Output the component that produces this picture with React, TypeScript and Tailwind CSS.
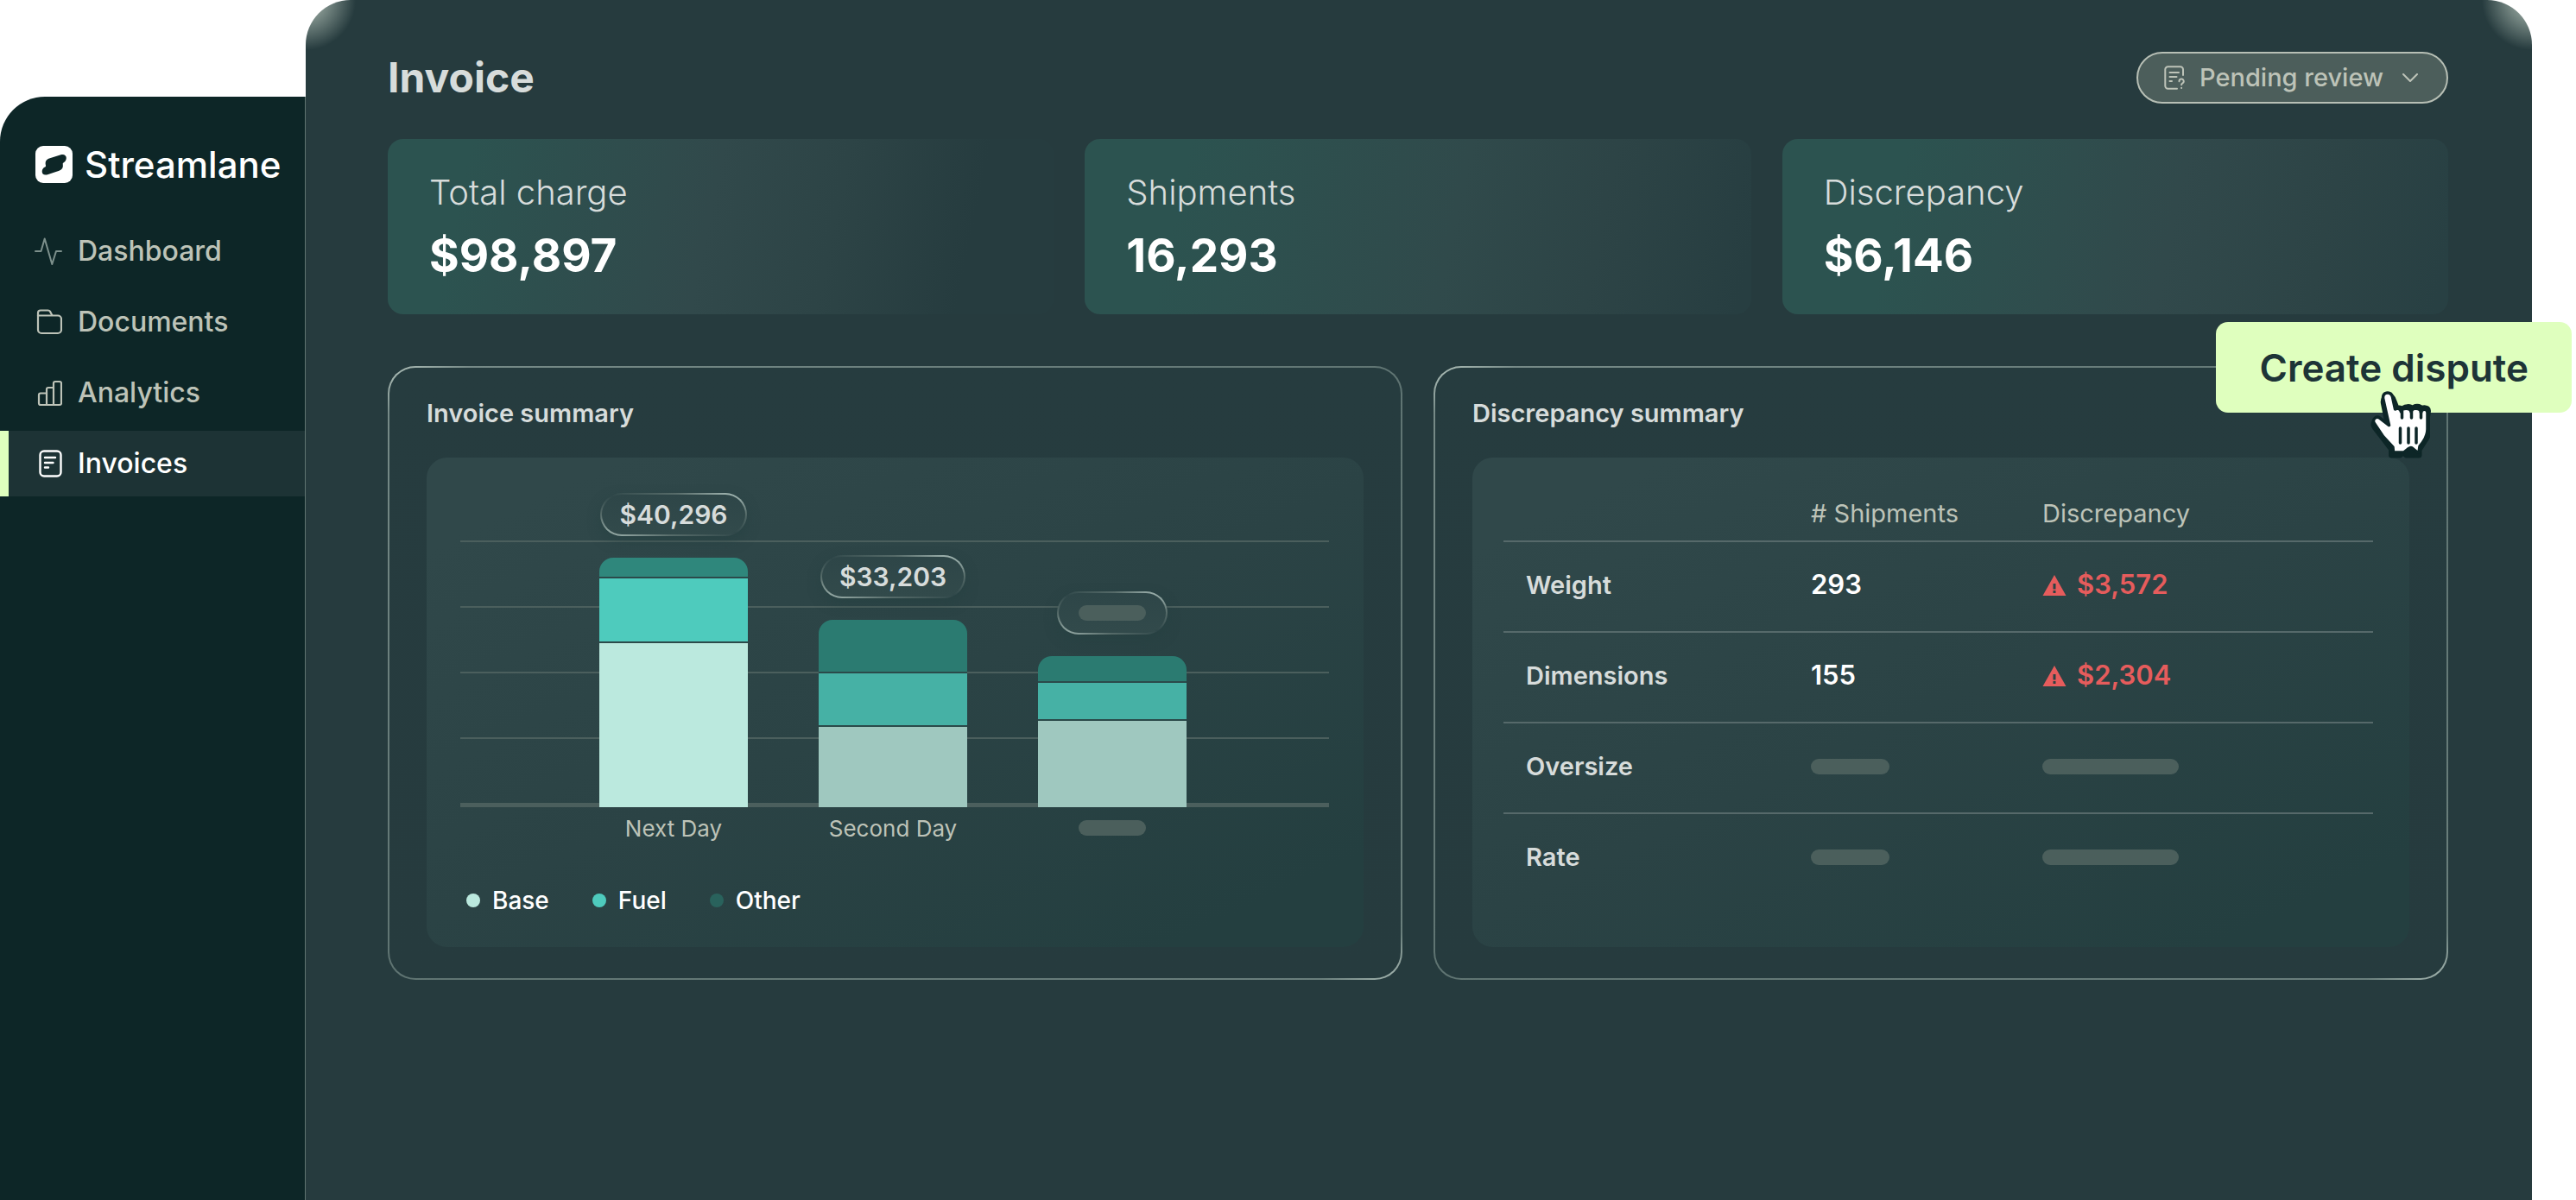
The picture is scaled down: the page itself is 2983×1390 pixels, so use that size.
import React, { useState } from 'react';

const ActivityIcon = () => (
  <svg viewBox="0 0 32 32" fill="none" stroke="#7d908c" strokeWidth={2} strokeLinecap="round" strokeLinejoin="round" className="size-8">
    <path d="M1 16h6.5L11.7 1.5 20.3 31l4.7-15h6" />
  </svg>
);

const FolderIcon = () => (
  <svg viewBox="0 0 32 32" fill="none" stroke="currentColor" strokeWidth={2.2} strokeLinejoin="round" className="size-8">
    <path d="M4 9V5.500A3 3 0 0 1 7 2.500h8.500a3 3 0 0 1 2.600 1.400L20.500 8.500" />
    <path d="M4 8.500h23a4 4 0 0 1 4 4V25a4 4 0 0 1-4 4H8a4 4 0 0 1-4-4V8.500Z" />
  </svg>
);

const ChartIcon = () => (
  <svg viewBox="0 0 32 32" fill="none" stroke="currentColor" strokeWidth={2.2} strokeLinejoin="round" className="size-8">
    <path d="M14 30V16.500H7A2 2 0 0 0 5 18.500V28a2 2 0 0 0 2 2h22a2 2 0 0 0 2-2V5a2 2 0 0 0-2-2h-5a2 2 0 0 0-2 2v25" />
    <path d="M14 17v-5a2 2 0 0 1 2-2h6" />
  </svg>
);

const DocIcon = () => (
  <svg viewBox="0 0 32 32" fill="none" stroke="currentColor" strokeWidth={2.4} strokeLinecap="round" className="size-8">
    <rect x="6.500" y="1.500" width="24" height="29" rx="4.500" />
    <path d="M12 9h12M12 15h9.500M12 20.500h4" />
  </svg>
);

const DocQuestionIcon = () => (
  <svg viewBox="0 0 24 28" fill="none" stroke="currentColor" strokeWidth={2} strokeLinecap="round" className="w-6 h-7">
    <path d="M22 11V4.500a3.200 3.200 0 0 0-3.200-3.200H4.500a3.200 3.200 0 0 0-3.200 3.200v19a3.200 3.200 0 0 0 3.200 3.200H15" />
    <path d="M6.500 8h10.500M6.500 13h8M6.500 18h2.500" />
    <path d="M17.500 18.200a2.600 2.600 0 1 1 3.900 2.200c-.8.500-1.300.9-1.300 1.800M20.100 25.700v.200" />
  </svg>
);

const WarningIcon = () => (
  <svg viewBox="0 0 28 24" className="w-7 h-6">
    <path d="M14 0 27.500 24H.500Z" fill="#e65c5c" />
    <path d="M12.500 10h3v6.500h-3ZM12.500 18h3v3h-3Z" fill="#2c4244" />
  </svg>
);

const HandCursor = () => (
  <svg viewBox="0 0 80 90" className="absolute left-[174px] top-[68px] w-20 h-[90px] pointer-events-none">
    <g fill="#0d2627" stroke="#0d2627" strokeWidth={7} strokeLinejoin="round">
      <path d="M25.500 15c-4 0-6 3-5 7.500L26 50 16 43c-4-2.500-9 2-6 6.500L29.500 75v7H39l4-4 3.500 4H61v-6l9.500-15V38l1-7c0-4-6-4-7-1-1-5-10-5-11 0-1.500-5-10-4-11 0-1-2-5-2.500-7-1l-3.500-9c-1-4-2.500-6-6-6Z" transform="translate(0 4)" />
    </g>
    <path
      d="M25 14c-4 0-6.200 3-5.200 7.500L26.500 51.500 15.500 43c-4-2.500-9 2-6 6.500l10 15 11.500 12.500.5 6h12l5-4c3-2 4-2 6 0l5 4h1.500L62 76c6-7 9-13 9-20V37c0-5-7-5-7.500 0-.500-6-10.500-6-11.500-1-1-5-10.500-5-11.500 0-1-4-5-4.500-7-3l-3-14c-.800-3.500-2.500-5-5.500-5Z"
      fill="#fff"
      stroke="#0d2627"
      strokeWidth={3.5}
      strokeLinejoin="round"
    />
    <path d="M39.500 55v17M49 55v17M58 55v17" stroke="#0d2627" strokeWidth={3.5} strokeLinecap="round" />
    <path d="M41.500 35v8M52.500 35v8M63.500 36v7" stroke="#0d2627" strokeWidth={3.5} strokeLinecap="round" />
  </svg>
);

const navItems = [
  { name: 'Dashboard', icon: <ActivityIcon /> },
  { name: 'Documents', icon: <FolderIcon /> },
  { name: 'Analytics', icon: <ChartIcon /> },
  { name: 'Invoices', icon: <DocIcon /> },
];

const stats = [
  { label: 'Total charge', value: '$98,897', bg: 'bg-[linear-gradient(102deg,#2c5350_12%,#31494b_48%,#2d4446_66%,#263c3f_86%)]' },
  { label: 'Shipments', value: '16,293', bg: 'bg-[linear-gradient(102deg,#2c5350_15%,#304a4b_55%,#2d4446_76%,#273e41_98%)]' },
  { label: 'Discrepancy', value: '$6,146', bg: 'bg-[linear-gradient(102deg,#2c5350_18%,#31494b_58%,#2d4446_80%,#284043_98%)]' },
];

// segment heights in px, top to bottom: other, fuel, base
const bars = [
  { name: 'Next Day', total: '$40,296', heights: [22, 73, 190], colors: ['bg-[#2f877c]', 'bg-[#4ecbbd]', 'bg-[#bbe9de]'] },
  { name: 'Second Day', total: '$33,203', heights: [60, 60, 93], colors: ['bg-[#2b7b71]', 'bg-[#46b1a5]', 'bg-[#9fc8bf]'] },
  { name: '', total: '', heights: [29, 42, 100], colors: ['bg-[#2b7b71]', 'bg-[#46b1a5]', 'bg-[#9fc8bf]'] },
];

const legend = [
  { name: 'Base', color: 'bg-[#bbe9de]' },
  { name: 'Fuel', color: 'bg-[#4ecbbd]' },
  { name: 'Other', color: 'bg-[#29625c]' },
];

const rows = [
  { name: 'Weight', shipments: '293', amount: '$3,572' },
  { name: 'Dimensions', shipments: '155', amount: '$2,304' },
  { name: 'Oversize' },
  { name: 'Rate' },
];

const Sidebar = () => (
  <aside className="w-[354px] shrink-0 mt-28 pt-[57px] bg-[#0d2627] rounded-tl-[52px] border-r border-[#5f7471]">
    <div className="flex items-center gap-3.5 pl-[41px] h-[43px]">
      <svg viewBox="0 0 43 43" className="size-[43px] shrink-0">
        <rect width="43" height="43" rx="9" fill="#fff" />
        <path
          d="M16 14.500 29.500 10.200C33 9.200 36 11 35.800 14c-.100 2.300-1 4-3 5.200-1 .600-1.300 1-1 2.300.500 3.500-.800 6-4.300 7.200L14 33.200c-3.800 1.200-6.600-.700-6.300-4 .200-2.200 1.300-3.700 3.300-4.700 1-.500 1.200-1.200.900-2.300-.800-4 .600-6.500 4.100-7.700Z"
          fill="#0d2627"
        />
      </svg>
      <span className="text-[42px] font-medium text-white">Streamlane</span>
    </div>
    <nav className="flex flex-col gap-1.5 mt-[41px]">
      {navItems.map((item) => {
        const active = item.name === 'Invoices';
        return (
          <a
            key={item.name}
            href="#"
            className={`flex items-center gap-[18px] h-[76px] text-[32px] font-medium ${
              active
                ? 'pl-[30px] border-l-[10px] border-[#dfffbe] bg-[#1d3335] text-white'
                : 'pl-10 text-[#bdc3b8]'
            }`}
          >
            {item.icon}
            {item.name}
          </a>
        );
      })}
    </nav>
  </aside>
);

const StatusSelect = () => {
  const [status, setStatus] = useState('Pending review');

  return (
    <div className="relative text-[#bdc3b8]">
      <div className="absolute inset-y-0 left-8 flex items-center pointer-events-none">
        <DocQuestionIcon />
      </div>
      <select
        aria-label="Invoice status"
        value={status}
        onChange={(e) => setStatus(e.target.value)}
        className="appearance-none h-[60px] pl-[71px] pr-[73px] rounded-full border-2 border-[#b7bfb5] bg-[#4c5e5b] text-[29px] font-medium leading-[40px]"
      >
        <option>Pending review</option>
      </select>
      <svg viewBox="0 0 18 10" fill="none" stroke="currentColor" strokeWidth={2} strokeLinecap="round" strokeLinejoin="round" className="absolute right-[35px] top-[25px] w-[18px] h-2.5 pointer-events-none">
        <path d="m1 1 8 8 8-8" />
      </svg>
    </div>
  );
};

const panelClass =
  'relative flex-1 min-w-0 rounded-[32px] border-2 border-transparent px-[43px] pt-[34px] pb-9 [background:linear-gradient(#263c3f,#263b3e)_padding-box,linear-gradient(150deg,#b4c4bd_0%,#768a87_4%,#5f7472_50%,#6a7f7c_96%,#a9bab4_100%)_border-box]';
const innerClass =
  'mt-8 h-[567px] rounded-3xl bg-[linear-gradient(155deg,#30484a_10%,#2b4345_50%,#243f40_90%)]';

const InvoiceSummary = () => (
  <section className={panelClass}>
    <h2 className="text-[29px] leading-[38px] font-semibold text-[#d7dcdb]">Invoice summary</h2>
    <div className={`${innerClass} pl-[39px] pr-10 pt-[41px]`}>
      <div className="grid">
        <div className="[grid-area:1/1] self-end border-b-[5px] border-[#4b5f5d]">
          {[1, 2, 3, 4].map((n) => (
            <div key={n} className="h-[76px] border-t-2 border-[#4b5f5d]" />
          ))}
        </div>
        <div className="[grid-area:1/1] flex justify-center items-end gap-[82px] pr-1">
          {bars.map((bar, i) => (
            <div key={i} className="w-[172px] flex flex-col items-center">
              <div className="h-[50px] mb-[25px] px-5 flex items-center rounded-full border-2 border-transparent text-[30px] font-semibold text-[#d7dcdb] shadow-[0_6px_14px_#24403f80] [background:linear-gradient(#2e4648,#324a4b)_padding-box,linear-gradient(to_top_right,#a9bdb8_0%,#566b69_25%,#2f4749_50%,#566b69_75%,#b9cdc8_100%)_border-box]">
                {bar.total || <div className="w-[78px] h-[18px] mx-[3px] rounded-full bg-[#4b5f5c]" />}
              </div>
              <div className="w-full flex flex-col gap-0.5 rounded-t-2xl overflow-hidden bg-[#2b4a4a]">
                {bar.heights.map((h, j) => (
                  <div key={j} className={bar.colors[j]} style={{ height: h }} />
                ))}
              </div>
            </div>
          ))}
        </div>
      </div>
      <div className="flex justify-center gap-[82px] mt-1 pr-1">
        {bars.map((bar, i) => (
          <div key={i} className="w-[172px] h-10 flex items-center justify-center text-[26px] text-[#bdc3b8] whitespace-nowrap">
            {bar.name || <div className="w-[78px] h-[18px] rounded-full bg-[#4b5f5c]" />}
          </div>
        ))}
      </div>
      <ul className="flex gap-[50px] mt-11 pl-[7px]">
        {legend.map((item) => (
          <li key={item.name} className="flex items-center gap-3.5 text-[28px] leading-10 font-medium text-white">
            <span className={`size-4 rounded-full ${item.color}`} />
            {item.name}
          </li>
        ))}
      </ul>
    </div>
  </section>
);

const DiscrepancySummary = () => (
  <section className={panelClass}>
    <h2 className="text-[29px] leading-[38px] font-semibold text-[#d7dcdb]">Discrepancy summary</h2>
    <div className={`${innerClass} pl-9 pr-[42px] pt-[33px]`}>
      <table className="w-full table-fixed text-left">
        <thead>
          <tr className="h-16 border-b-2 border-[#56696a] text-[29px] text-[#bdc3b8]">
            <th className="w-[356px]" />
            <th className="w-[268px] font-normal"># Shipments</th>
            <th className="font-normal">Discrepancy</th>
          </tr>
        </thead>
        <tbody>
          {rows.map((row) => (
            <tr key={row.name} className="h-[105px] border-b-2 border-[#56696a] last:border-b-0">
              <th className="pl-[26px] pb-1 text-[29px] font-semibold text-[#d7dcdb]">{row.name}</th>
              <td className="pb-1 text-[31px] font-semibold text-white">
                {row.shipments || <div className="w-[91px] h-[18px] rounded-full bg-[#4b5f5c]" />}
              </td>
              <td className="pb-1 text-[31px] font-semibold text-[#e65c5c]">
                {row.amount ? (
                  <div className="flex items-center gap-3">
                    <WarningIcon />
                    {row.amount}
                  </div>
                ) : (
                  <div className="w-[158px] h-[18px] rounded-full bg-[#4b5f5c]" />
                )}
              </td>
            </tr>
          ))}
        </tbody>
      </table>
    </div>
    <div className="absolute -top-[53px] -right-[145px]">
      <button className="h-[105px] px-[50px] rounded-[14px] bg-[#dfffbe] text-[44px] font-semibold text-[#1d3437] whitespace-nowrap">
        Create dispute
      </button>
      <HandCursor />
    </div>
  </section>
);

const App = () => {
  return (
    <div className="flex min-h-screen bg-white font-[Inter,sans-serif] overflow-hidden">
      <Sidebar />
      <main className="flex-1 min-w-0 mr-[51px] pl-[95px] pr-[97px] pt-[60px] rounded-t-[52px] bg-[#263b3e] [background-image:radial-gradient(circle_at_0_0,#84958f_20px,#263b3e00_58px),radial-gradient(circle_at_100%_0,#84958f_20px,#263b3e00_58px)]">
        <header className="flex items-center justify-between h-[60px]">
          <h1 className="text-[48px] font-bold text-[#d7dcdb]">Invoice</h1>
          <StatusSelect />
        </header>
        <div className="grid grid-cols-3 gap-9 mt-[41px]">
          {stats.map((stat) => (
            <div key={stat.label} className={`h-[203px] pl-12 pt-[35px] rounded-[18px] ${stat.bg}`}>
              <p className="text-[40px] leading-[54px] font-light text-[#d7dcdb]">{stat.label}</p>
              <p className="mt-[11px] text-[53px] leading-[70px] font-bold text-white">{stat.value}</p>
            </div>
          ))}
        </div>
        <div className="flex gap-9 mt-[60px]">
          <InvoiceSummary />
          <DiscrepancySummary />
        </div>
      </main>
    </div>
  );
};

export default App;
